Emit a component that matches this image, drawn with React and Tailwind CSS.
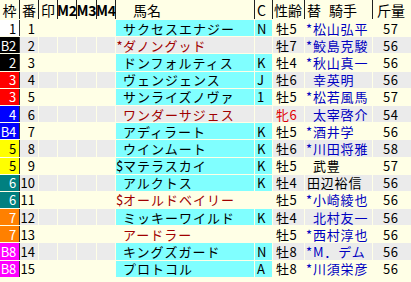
import React from "react";

const grid =
  "grid grid-cols-[19px_18px_18px_18px_19px_18px_138px_17px_31px_67px_38px] gap-x-px";

const wakuStyle = {
  1: "bg-white text-black",
  2: "bg-black text-white",
  3: "bg-[#ff0000] text-white",
  4: "bg-[#0000ff] text-white",
  5: "bg-[#ffff00] text-black",
  6: "bg-[#008080] text-white",
  7: "bg-[#ff8000] text-white",
  8: "bg-[#ff00ff] text-white",
};

const horses = [
  { w: 1, wl: "1", no: 1, pre: "", name: "サクセスエナジー", cyan: true, c: "N", sex: "牡5", jp: "*", jockey: "松山弘平", blue: true, kg: 57 },
  { w: 2, wl: "B2", no: 2, pre: "*", name: "ダノングッド", red: true, sex: "牡7", jp: "*", jockey: "鮫島克駿", blue: true, kg: 56 },
  { w: 2, wl: "2", no: 3, pre: "", name: "ドンフォルティス", cyan: true, c: "K", sex: "牡4", jp: "*", jockey: "秋山真一", blue: true, kg: 56 },
  { w: 3, wl: "3", no: 4, pre: "", name: "ヴェンジェンス", cyan: true, c: "J", sex: "牡6", jp: " ", jockey: "幸英明", blue: true, kg: 56 },
  { w: 3, wl: "3", no: 5, pre: "", name: "サンライズノヴァ", cyan: true, c: "1", sex: "牡5", jp: "*", jockey: "松若風馬", blue: true, kg: 57 },
  { w: 4, wl: "4", no: 6, pre: "", name: "ワンダーサジェス", red: true, sex: "牝6", filly: true, jp: " ", jockey: "太宰啓介", blue: true, kg: 54 },
  { w: 4, wl: "B4", no: 7, pre: "", name: "アディラート", cyan: true, c: "K", sex: "牡5", jp: "*", jockey: "酒井学", blue: true, kg: 56 },
  { w: 5, wl: "5", no: 8, pre: "", name: "ウインムート", cyan: true, c: "K", sex: "牡6", jp: "*", jockey: "川田将雅", blue: true, kg: 58 },
  { w: 5, wl: "5", no: 9, pre: "$", name: "マテラスカイ", cyan: true, c: "K", sex: "牡5", jp: " ", jockey: "武豊", kg: 57 },
  { w: 6, wl: "6", no: 10, pre: "", name: "アルクトス", cyan: true, c: "K", sex: "牡4", jp: "", jockey: "田辺裕信", kg: 56 },
  { w: 6, wl: "6", no: 11, pre: "$", name: "オールドベイリー", red: true, sex: "牡5", jp: "*", jockey: "小崎綾也", blue: true, kg: 56 },
  { w: 7, wl: "7", no: 12, pre: "", name: "ミッキーワイルド", cyan: true, c: "K", sex: "牡4", jp: " ", jockey: "北村友一", blue: true, kg: 56 },
  { w: 7, wl: "7", no: 13, pre: "", name: "アードラー", red: true, sex: "牡5", jp: "*", jockey: "西村淳也", blue: true, kg: 56 },
  { w: 8, wl: "B8", no: 14, pre: "", name: "キングズガード", cyan: true, c: "N", sex: "牡8", jp: "*", jockey: "M．デム", blue: true, kg: 56 },
  { w: 8, wl: "B8", no: 15, pre: "", name: "プロトコル", cyan: true, c: "A", sex: "牡8", jp: "*", jockey: "川須栄彦", blue: true, kg: 56 },
];

function Head({ children, className = "" }) {
  return (
    <div className={`bg-[#ffffe6] flex items-center text-[14px] leading-none text-black ${className}`}>
      {children}
    </div>
  );
}

export default function App() {
  return (
    <div className="w-[411px] h-[282px] overflow-hidden bg-[#ffffe6] font-['Noto_Sans_CJK_JP',sans-serif]">
      <div className={`${grid} h-[19px] bg-[#202020]`}>
        <Head className="justify-center">枠</Head>
        <Head className="justify-center">番</Head>
        <Head className="justify-center">印</Head>
        <Head className="justify-center text-[11px] font-bold">M2</Head>
        <Head className="justify-center text-[11px] font-bold">M3</Head>
        <Head className="justify-center text-[11px] font-bold">M4</Head>
        <Head className="pl-[17px]">馬名</Head>
        <Head className="pl-[2px]">C</Head>
        <Head className="pl-px">性齢</Head>
        <Head className="pl-[2px]">
          替<span className="ml-[8px]">騎手</span>
        </Head>
        <Head className="pl-[4px]">斤量</Head>
      </div>
      <div className="flex flex-col gap-px pt-px">
        {horses.map((h, i) => {
          const row = i % 2 === 1 ? "bg-[#ebebeb]" : "bg-[#ffffe6]";
          return (
            <div key={h.no} className={`${grid} h-[16.2px] text-[13px] leading-none`}>
              <div
                className={`${wakuStyle[h.w]} flex items-center justify-end pr-[3px] tracking-[-0.3px] shadow-[1px_0_0_#303030]`}
              >
                {h.wl}
              </div>
              <div className={`${row} flex items-center justify-end pr-[3px] text-black`}>{h.no}</div>
              <div className={row}></div>
              <div className={row}></div>
              <div className={row}></div>
              <div className={row}></div>
              <div
                className={`${h.cyan ? "bg-[#80ffff]" : row} flex items-center whitespace-nowrap tracking-[1px] ${
                  h.red ? "text-[#a00000]" : "text-black"
                }`}
              >
                <span className="w-[7px] shrink-0 text-center tracking-normal">{h.pre}</span>
                {h.name}
              </div>
              <div className={`${h.c ? "bg-[#80ffff]" : row} flex items-center pl-[2px] text-black`}>
                {h.c}
              </div>
              <div className={`${row} flex items-center pl-[3px] tracking-[0.5px] ${h.filly ? "text-[#e00000]" : "text-black"}`}>
                {h.sex}
              </div>
              <div
                className={`${row} flex items-center whitespace-nowrap tracking-[0.8px] ${
                  h.blue ? "text-[#0000c0]" : "text-black"
                } ${h.jp === "" ? "pl-[2px]" : ""}`}
              >
                {h.jp !== "" && <span className="w-[8px] shrink-0 text-center tracking-normal">{h.jp.trim()}</span>}
                {h.jockey}
              </div>
              <div className={`${row} flex items-center pl-[10px] text-black tracking-[0.5px]`}>{h.kg}</div>
            </div>
          );
        })}
      </div>
    </div>
  );
}
